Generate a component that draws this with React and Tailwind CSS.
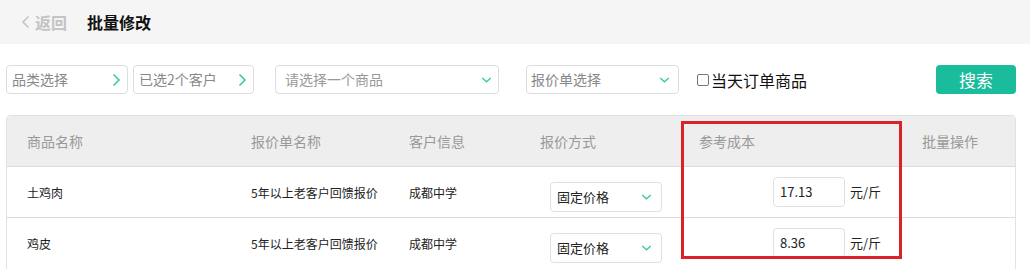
import React from "react";

const font = { fontFamily: '"Microsoft YaHei", "Noto Sans CJK SC", "Noto Sans", sans-serif' };

const ChevronRight = () => (
  <svg width="9" height="14" viewBox="0 0 9 14" fill="none">
    <path d="M1.5 1.5 L7 7 L1.5 12.5" stroke="#3cc9a5" strokeWidth="1.6" />
  </svg>
);

const ChevronDown = ({ w = 13 }) => (
  <svg width={w} height="8" viewBox="0 0 13 8" fill="none">
    <path d="M1.5 1.5 L6.5 6.2 L11.5 1.5" stroke="#3cc9a5" strokeWidth="1.6" />
  </svg>
);

const rows = [
  { name: "土鸡肉", cost: "17.13" },
  { name: "鸡皮", cost: "8.36" },
];

const cols = "grid grid-cols-[224px_158px_131px_159px_223px_1fr]";

export default function App() {
  return (
    <div className="w-[1030px] h-[269px] bg-white overflow-hidden" style={font}>
      {/* top bar */}
      <div className="h-[44px] bg-[#f5f5f5] flex items-center pl-[21px]">
        <div className="flex items-center text-[16px] font-bold text-[#c4c4c4] gap-[5px]">
          <svg width="9" height="14" viewBox="0 0 9 14" fill="none">
            <path d="M7.5 1.5 L2 7 L7.5 12.5" stroke="#c4c4c4" strokeWidth="1.6" />
          </svg>
          <span>返回</span>
        </div>
        <div className="ml-[20px] text-[16px] font-bold text-[#111]">批量修改</div>
      </div>

      {/* filters */}
      <div className="flex items-center mt-[21px] pl-[6px] h-[29px]">
        <div className="w-[122px] h-[29px] border border-[#ddd] rounded-[4px] flex items-center justify-between pl-[5px] pr-[6px] text-[14px] text-[#888]">
          <span>品类选择</span>
          <ChevronRight />
        </div>
        <div className="ml-[5px] w-[121px] h-[29px] border border-[#ddd] rounded-[4px] flex items-center justify-between pl-[5px] pr-[6px] text-[14px] text-[#888]">
          <span>已选2个客户</span>
          <ChevronRight />
        </div>
        <div className="ml-[21px] w-[224px] h-[29px] border border-[#ddd] rounded-[4px] flex items-center justify-between pl-[9px] pr-[6px] text-[14px] text-[#999]">
          <span>请选择一个商品</span>
          <ChevronDown w={11} />
        </div>
        <div className="ml-[27px] w-[153px] h-[29px] border border-[#ddd] rounded-[4px] flex items-center justify-between pl-[4px] pr-[8px] text-[14px] text-[#888]">
          <span>报价单选择</span>
          <ChevronDown w={11} />
        </div>
        <label className="ml-[18px] flex items-center gap-[2px] text-[16px] text-[#111]">
          <span className="w-[12px] h-[12px] border border-[#777] rounded-[2px] bg-white" />
          <span>当天订单商品</span>
        </label>
        <button className="ml-auto mr-[14px] w-[80px] h-[29px] rounded-[4px] bg-[#1abc9c] text-white text-[17px] flex items-center justify-center">
          搜索
        </button>
      </div>

      {/* table */}
      <div className="relative mt-[21px] ml-[6px] w-[1010px] border border-[#e2e2e2] rounded-t-[4px]">
        <div className={`${cols} h-[51px] bg-[#eeeeee] border-b border-[#dcdcdc] items-center text-[14px] text-[#999]`}>
          <div className="pl-[20px]">商品名称</div>
          <div className="pl-[20px]">报价单名称</div>
          <div className="pl-[20px]">客户信息</div>
          <div className="pl-[20px]">报价方式</div>
          <div className="pl-[20px]">参考成本</div>
          <div className="pl-[20px]">批量操作</div>
        </div>
        {rows.map((r, i) => (
          <div
            key={r.name}
            className={`${cols} h-[51px] items-start text-[12px] text-[#222] ${i === 0 ? "border-b border-[#dcdcdc]" : ""}`}
          >
            <div className="pl-[20px] pt-[17px]">{r.name}</div>
            <div className="pl-[20px] pt-[17px]">5年以上老客户回馈报价</div>
            <div className="pl-[20px] pt-[17px]">成都中学</div>
            <div className="pl-[30px] pt-[15px]">
              <div className="w-[112px] h-[30px] border border-[#e0e0e0] rounded-[4px] flex items-center justify-between pl-[6px] pr-[9px] text-[13px] text-[#222]">
                <span>固定价格</span>
                <ChevronDown w={11} />
              </div>
            </div>
            <div className="pl-[94px] pt-[10px] flex items-center gap-[5px]">
              <div className="w-[72px] h-[30px] border border-[#e0e0e0] rounded-[4px] flex items-center pl-[6px] text-[13px] text-[#222]">
                {r.cost}
              </div>
              <span className="text-[13px] text-[#222]">元/斤</span>
            </div>
            <div />
          </div>
        ))}

        {/* annotation box */}
        <div className="absolute left-[674px] top-[5px] w-[221px] h-[138px] border-[3px] border-[#d9222a] pointer-events-none" />
      </div>
    </div>
  );
}
